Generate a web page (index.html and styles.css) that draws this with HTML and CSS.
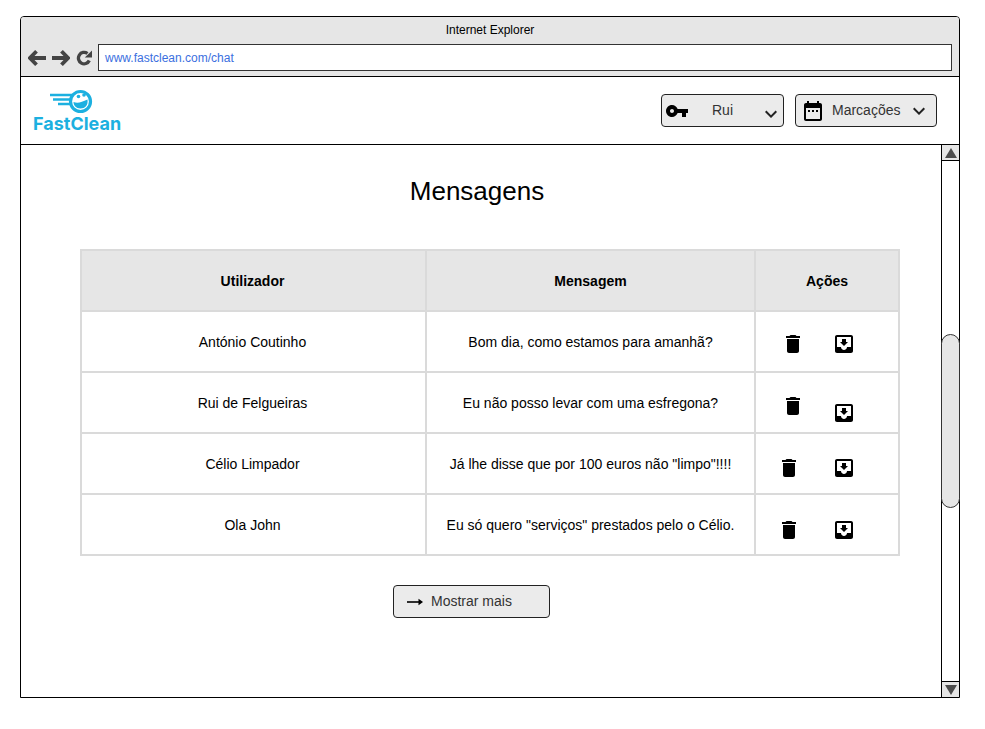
FILE: index.html
```html
<!DOCTYPE html>
<html lang="pt">
<head>
<meta charset="utf-8">
<title>FastClean - Mensagens</title>
<link rel="stylesheet" href="styles.css">
</head>
<body>
<div class="frame">
  <div class="chrome">
    <div class="chrome-title">Internet Explorer</div>
    <div class="chrome-nav">
      <svg class="nav-icon" viewBox="0 0 18 16"><path d="M8.500 1.300 2 8l6.500 6.700M3 8H18" fill="none" stroke="#444" stroke-width="3.800"/></svg>
      <svg class="nav-icon" viewBox="0 0 18 16"><path d="M9.500 1.300 16 8l-6.500 6.700M15 8H0" fill="none" stroke="#444" stroke-width="3.800"/></svg>
      <svg class="reload" viewBox="0 0 16 16"><path d="M13.300 10.500A5.700 5.700 0 1 1 11.500 3.500" fill="none" stroke="#444" stroke-width="3.300"/><path d="M8.800 7.500H16V.5z" fill="#444"/></svg>
      <div class="address">www.fastclean.com/chat</div>
    </div>
  </div>
  <header class="topbar">
    <div class="logo">
      <svg class="logo-mark" viewBox="0 0 50 26">
        <path d="M0 7H22M3 11.500H21M8 16H21" stroke="#1cb0e0" stroke-width="2.600" fill="none"/>
        <circle cx="30.500" cy="13.500" r="10" fill="#fff" stroke="#1cb0e0" stroke-width="3.200"/>
        <path d="M23.500 14c4 1.500 8 .5 14-2.500 .8 6-2.500 9-7 9s-7-3-7-6.500z" fill="#1cb0e0"/>
        <circle cx="28.500" cy="8.500" r="1.800" fill="#1cb0e0"/>
        <circle cx="34" cy="7" r="1.800" fill="#1cb0e0"/>
      </svg>
      <div class="logo-text">FastClean</div>
    </div>
    <div class="menus">
      <div class="menu menu-user">
        <svg class="menu-icon" viewBox="0 0 24 24"><path d="M12.650 10C11.830 7.670 9.610 6 7 6c-3.310 0-6 2.690-6 6s2.690 6 6 6c2.610 0 4.830-1.670 5.650-4H17v4h4v-4h2v-4H12.650zM7 14c-1.100 0-2-.9-2-2s.9-2 2-2 2 .9 2 2-.9 2-2 2z"/></svg>
        <span class="menu-label">Rui</span>
        <svg class="chevron chevron-low" viewBox="0 0 24 24"><path d="M16.590 8.590 12 13.170 7.410 8.590 6 10l6 6 6-6z"/></svg>
      </div>
      <div class="menu menu-book">
        <svg class="menu-icon" viewBox="0 0 24 24"><path d="M9 11H7v2h2v-2zm4 0h-2v2h2v-2zm4 0h-2v2h2v-2zm2-7h-1V2h-2v2H8V2H6v2H5c-1.110 0-1.990.9-1.990 2L3 20c0 1.100.89 2 2 2h14c1.100 0 2-.9 2-2V6c0-1.100-.9-2-2-2zm0 16H5V9h14v11z"/></svg>
        <span class="menu-label">Marcações</span>
        <svg class="chevron" viewBox="0 0 24 24"><path d="M16.590 8.590 12 13.170 7.410 8.590 6 10l6 6 6-6z"/></svg>
      </div>
    </div>
  </header>
  <div class="viewport">
    <main class="content">
      <h1 class="title">Mensagens</h1>
      <table class="messages">
        <colgroup><col class="col-user"><col class="col-msg"><col class="col-act"></colgroup>
        <thead>
          <tr><th>Utilizador</th><th>Mensagem</th><th>Ações</th></tr>
        </thead>
        <tbody>
          <tr>
            <td>António Coutinho</td>
            <td>Bom dia, como estamos para amanhã?</td>
            <td class="actions"><div class="action-row">
              <svg class="act trash t-1" viewBox="0 0 24 24"><path d="M6 19c0 1.100.9 2 2 2h8c1.100 0 2-.9 2-2V7H6v12zM19 4h-3.500l-1-1h-5l-1 1H5v2h14V4z"/></svg>
              <svg class="act inbox b-1" viewBox="0 0 24 24"><path d="M19 3H4.990c-1.110 0-1.980.9-1.980 2L3 19c0 1.100.88 2 1.990 2H19c1.100 0 2-.9 2-2V5c0-1.100-.9-2-2-2zm0 12h-4c0 1.660-1.350 3-3 3s-3-1.340-3-3H4.990V5H19v10zm-3-5h-2V7h-4v3H8l4 4 4-4z"/></svg>
            </div></td>
          </tr>
          <tr>
            <td>Rui de Felgueiras</td>
            <td>Eu não posso levar com uma esfregona?</td>
            <td class="actions"><div class="action-row">
              <svg class="act trash t-2" viewBox="0 0 24 24"><path d="M6 19c0 1.100.9 2 2 2h8c1.100 0 2-.9 2-2V7H6v12zM19 4h-3.500l-1-1h-5l-1 1H5v2h14V4z"/></svg>
              <svg class="act inbox b-2" viewBox="0 0 24 24"><path d="M19 3H4.990c-1.110 0-1.980.9-1.980 2L3 19c0 1.100.88 2 1.990 2H19c1.100 0 2-.9 2-2V5c0-1.100-.9-2-2-2zm0 12h-4c0 1.660-1.350 3-3 3s-3-1.340-3-3H4.990V5H19v10zm-3-5h-2V7h-4v3H8l4 4 4-4z"/></svg>
            </div></td>
          </tr>
          <tr>
            <td>Célio Limpador</td>
            <td>Já lhe disse que por 100 euros não "limpo"!!!!</td>
            <td class="actions"><div class="action-row">
              <svg class="act trash t-3" viewBox="0 0 24 24"><path d="M6 19c0 1.100.9 2 2 2h8c1.100 0 2-.9 2-2V7H6v12zM19 4h-3.500l-1-1h-5l-1 1H5v2h14V4z"/></svg>
              <svg class="act inbox b-3" viewBox="0 0 24 24"><path d="M19 3H4.990c-1.110 0-1.980.9-1.980 2L3 19c0 1.100.88 2 1.990 2H19c1.100 0 2-.9 2-2V5c0-1.100-.9-2-2-2zm0 12h-4c0 1.660-1.350 3-3 3s-3-1.340-3-3H4.990V5H19v10zm-3-5h-2V7h-4v3H8l4 4 4-4z"/></svg>
            </div></td>
          </tr>
          <tr>
            <td>Ola John</td>
            <td>Eu só quero "serviços" prestados pelo o Célio.</td>
            <td class="actions"><div class="action-row">
              <svg class="act trash t-4" viewBox="0 0 24 24"><path d="M6 19c0 1.100.9 2 2 2h8c1.100 0 2-.9 2-2V7H6v12zM19 4h-3.500l-1-1h-5l-1 1H5v2h14V4z"/></svg>
              <svg class="act inbox b-4" viewBox="0 0 24 24"><path d="M19 3H4.990c-1.110 0-1.980.9-1.980 2L3 19c0 1.100.88 2 1.990 2H19c1.100 0 2-.9 2-2V5c0-1.100-.9-2-2-2zm0 12h-4c0 1.660-1.350 3-3 3s-3-1.340-3-3H4.990V5H19v10zm-3-5h-2V7h-4v3H8l4 4 4-4z"/></svg>
            </div></td>
          </tr>
        </tbody>
      </table>
      <div class="more-wrap">
        <div class="more">
          <svg class="more-arrow" viewBox="0 0 16 8"><path d="M0 4H13" stroke="#000" stroke-width="1.600" fill="none"/><path d="M11.500 .8 16 4l-4.500 3.200z"/></svg>
          <span class="more-label">Mostrar mais</span>
        </div>
      </div>
    </main>
    <aside class="scrollbar">
      <div class="scroll-btn scroll-up"><span class="tri tri-up"></span></div>
      <div class="scroll-track"><div class="scroll-thumb"></div></div>
      <div class="scroll-btn scroll-down"><span class="tri tri-down"></span></div>
    </aside>
  </div>
</div>
</body>
</html>
```
FILE: styles.css
```css
* { box-sizing: border-box; }
html, body { margin: 0; padding: 0; background: #fff; }
body {
  padding: 16px 25px 31px 20px;
  font-family: "Liberation Sans", Arial, sans-serif;
  color: #000;
}
.frame {
  width: 940px;
  height: 682px;
  border: 1px solid #000;
  border-radius: 4px 4px 0 0;
  display: flex;
  flex-direction: column;
}
.chrome {
  height: 60px;
  background: #e6e6e6;
  border-bottom: 1px solid #000;
  border-radius: 3px 3px 0 0;
  flex: none;
}
.chrome-title {
  height: 27px;
  line-height: 26px;
  font-size: 12px;
  text-align: center;
  color: #000;
}
.chrome-nav {
  display: flex;
  align-items: center;
  padding-left: 7px;
  padding-right: 7px;
}
.nav-icon { width: 18px; height: 16px; margin-right: 6px; flex: none; }
.reload { width: 16px; height: 16px; margin-right: 6px; flex: none; }
.address {
  flex: 1;
  height: 27px;
  line-height: 26px;
  background: #fff;
  border: 1px solid #333;
  padding-left: 6px;
  font-size: 12px;
  color: #3b6fe0;
}
.topbar {
  height: 68px;
  flex: none;
  border-bottom: 1px solid #000;
  display: flex;
  justify-content: space-between;
  padding: 0 22px 0 12px;
}
.logo { width: 92px; padding-top: 11px; }
.logo-mark { display: block; width: 50px; height: 26px; margin-left: 17px; }
.logo-text {
  font-family: "Inter", sans-serif;
  font-weight: 700;
  font-size: 18px;
  line-height: 19px;
  color: #1cb0e0;
  white-space: nowrap;
}
.menus { display: flex; gap: 11px; padding-top: 17px; }
.menu {
  height: 33px;
  background: #ebebeb;
  border: 1px solid #222;
  border-radius: 4px;
  display: flex;
  align-items: center;
  font-size: 14px;
  color: #333;
}
.menu-label { position: relative; top: -1px; }
.menu-user { width: 123px; padding-left: 3px; }
.menu-book { width: 142px; padding-left: 5px; }
.menu-icon { width: 24px; height: 24px; flex: none; fill: #000; }
.menu-user .menu-label { margin-left: 23px; width: 47px; }
.menu-book .menu-label { margin-left: 7px; }
.chevron { width: 24px; height: 24px; flex: none; fill: #222; }
.menu-book .chevron { margin-left: 7px; }
.chevron-low { margin-top: 6px; }
.viewport { flex: 1; display: flex; min-height: 0; }
.content { flex: 1; padding: 31px 0 0 59px; min-width: 0; }
.title {
  margin: 0;
  width: 794px;
  font-weight: 400;
  font-size: 26px;
  line-height: 30px;
  text-align: center;
  color: #000;
}
.messages {
  margin-top: 43px;
  width: 818px;
  border-collapse: collapse;
  table-layout: fixed;
  font-size: 14px;
}
.col-user { width: 345px; }
.col-msg { width: 329px; }
.col-act { width: 144px; }
.messages th, .messages td {
  height: 61px;
  padding: 0;
  border: 2px solid #dadada;
  text-align: center;
  vertical-align: middle;
  font-size: 14px;
}
.messages th:first-child, .messages td:first-child { padding-right: 2px; }
.messages th { background: #e6e6e6; font-weight: 700; }
.messages td.actions { vertical-align: top; }
.action-row { display: flex; height: 59px; }
.act { width: 24px; height: 24px; fill: #000; flex: none; }
.trash { margin-left: 25px; }
.inbox { margin-left: 27px; }
.t-1, .b-1 { margin-top: 20px; }
.t-2 { margin-top: 21px; }
.b-2 { margin-top: 28px; }
.t-3 { margin-top: 22px; margin-left: 21px; }
.b-3 { margin-top: 22px; margin-left: 31px; }
.t-4 { margin-top: 23px; margin-left: 21px; }
.b-4 { margin-top: 23px; margin-left: 31px; }
.more-wrap { margin-top: 29px; padding-left: 313px; }
.more {
  width: 157px;
  height: 33px;
  background: #ebebeb;
  border: 1px solid #222;
  border-radius: 4px;
  display: flex;
  align-items: center;
  padding-left: 13px;
  font-size: 14px;
  color: #333;
}
.more-arrow { width: 16px; height: 8px; margin-right: 8px; flex: none; }
.more-label { position: relative; top: -1px; }
.scrollbar {
  width: 18px;
  flex: none;
  border-left: 1px solid #000;
  display: flex;
  flex-direction: column;
}
.scroll-btn {
  height: 16px;
  flex: none;
  background: #e6e6e6;
  display: flex;
  align-items: center;
  justify-content: center;
}
.scroll-up { border-bottom: 1px solid #000; }
.scroll-down { border-top: 1px solid #000; }
.tri { width: 0; height: 0; border-left: 6px solid transparent; border-right: 6px solid transparent; }
.tri-up { border-bottom: 10px solid #4d4d4d; }
.tri-down { border-top: 10px solid #4d4d4d; }
.scroll-track { flex: 1; padding-top: 173px; }
.scroll-thumb {
  height: 174px;
  margin: 0 -1px;
  background: #e6e6e6;
  border: 1px solid #333;
  border-radius: 10px;
}
```
